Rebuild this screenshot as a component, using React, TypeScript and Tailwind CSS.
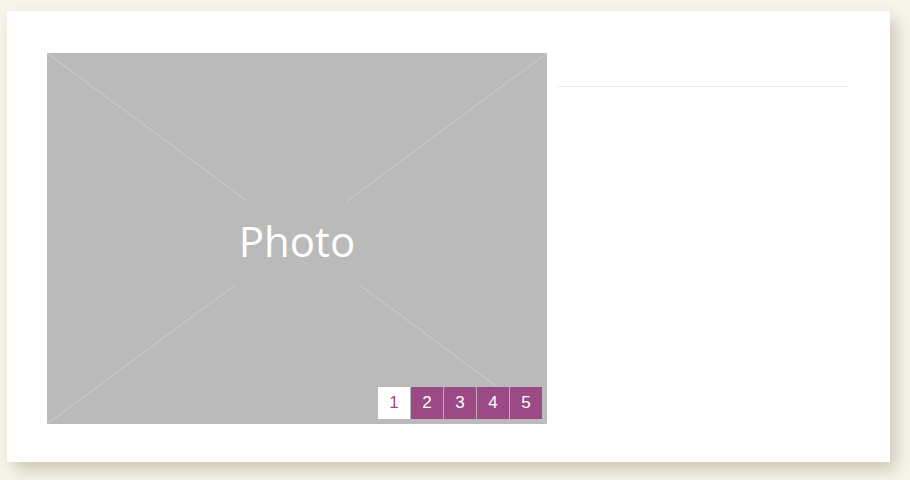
import React from 'react';

const pages = [1, 2, 3, 4, 5];

function PhotoPlaceholder() {
  return (
    <div className="relative w-[500px] h-[371px] bg-[#bababa] overflow-hidden">
      <svg className="absolute inset-0" width="500" height="371" viewBox="0 0 500 371">
        <g stroke="#cfcfcf" strokeWidth="1">
          <line x1="0" y1="0" x2="200" y2="148" />
          <line x1="500" y1="0" x2="300" y2="148" />
          <line x1="0" y1="371" x2="188" y2="232" />
          <line x1="500" y1="371" x2="314" y2="233" />
        </g>
      </svg>
      <div className="absolute inset-0 flex items-center justify-center">
        <span className="text-white text-[42px] leading-none font-['Open_Sans',sans-serif] font-normal mt-[4px]">Photo</span>
      </div>
      <div className="absolute right-[5px] bottom-[5px] flex">
        {pages.map((p) => (
          <button
            key={p}
            className={`h-[32px] flex items-center justify-center text-[17px] font-['Liberation_Sans',Arial,sans-serif] ${
              p === 1
                ? 'w-[32px] bg-white text-[#9b4a86]'
                : p === 2
                ? 'w-[32px] ml-px bg-[#9b4a86] text-white'
                : 'w-[33px] bg-[#9b4a86] text-white border-l border-[#c9a6c0]'
            }`}
          >
            {p}
          </button>
        ))}
      </div>
    </div>
  );
}

export default function App() {
  return (
    <div className="w-[910px] h-[480px] bg-[#f8f6ec] pt-[11px] pl-[7px]">
      <div className="w-[883px] h-[451px] bg-white shadow-[6px_8px_16px_rgba(120,110,80,0.35)] flex gap-[11px] pl-[40px] pt-[42px]">
        <PhotoPlaceholder />
        <div className="w-[290px] pt-[33px]">
          <div className="border-t border-[#ececec]" />
        </div>
      </div>
    </div>
  );
}
